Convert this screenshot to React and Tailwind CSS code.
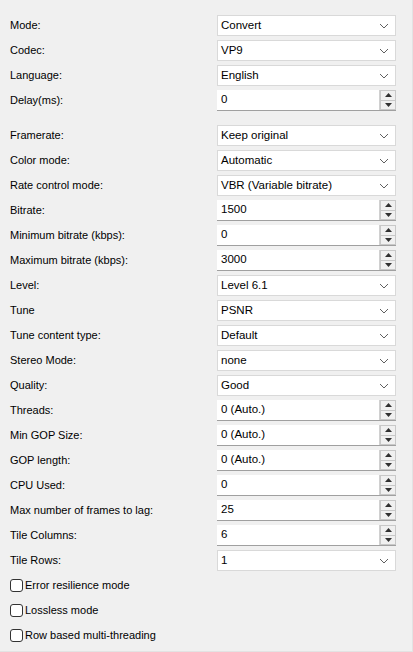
const F = { fontFamily: '"Segoe UI", "Liberation Sans", Arial, sans-serif' };

const Chevron = () => (
  <svg width="10" height="6" viewBox="0 0 10 6" className="shrink-0"><path d="M1 1l4 4 4-4" fill="none" stroke="#606060" strokeWidth="1" /></svg>
);

function Select({ value }) {
  return (
    <div className="w-[179px] h-[21px] bg-white border border-[#d9d9d9] flex items-center justify-between pl-[3px] pr-[6px] text-[11.5px] text-black">
      <span>{value}</span><Chevron />
    </div>
  );
}

function Spin({ value }) {
  return (
    <div className="w-[179px] h-[21px] bg-white border-b border-[#a0a0a0] flex items-center text-[11.5px] text-black">
      <span className="flex-1 pl-[4px]">{value}</span>
      <div className="w-[17px] h-full flex flex-col border-l border-[#d0d0d0]">
        <div className="flex-1 bg-[#f0f0f0] border border-[#c8c8c8] flex items-center justify-center"><svg width="7" height="4"><path d="M0 4L3.5 0L7 4z" fill="#303030" /></svg></div>
        <div className="flex-1 bg-[#f0f0f0] border border-[#c8c8c8] border-t-0 flex items-center justify-center"><svg width="7" height="4"><path d="M0 0L3.5 4L7 0z" fill="#303030" /></svg></div>
      </div>
    </div>
  );
}

const top = [
  ['Mode:', 's', 'Convert'],
  ['Codec:', 's', 'VP9'],
  ['Language:', 's', 'English'],
  ['Delay(ms):', 'n', '0'],
];
const rows = [
  ['Framerate:', 's', 'Keep original'],
  ['Color mode:', 's', 'Automatic'],
  ['Rate control mode:', 's', 'VBR (Variable bitrate)'],
  ['Bitrate:', 'n', '1500'],
  ['Minimum bitrate (kbps):', 'n', '0'],
  ['Maximum bitrate (kbps):', 'n', '3000'],
  ['Level:', 's', 'Level 6.1'],
  ['Tune', 's', 'PSNR'],
  ['Tune content type:', 's', 'Default'],
  ['Stereo Mode:', 's', 'none'],
  ['Quality:', 's', 'Good'],
  ['Threads:', 'n', '0 (Auto.)'],
  ['Min GOP Size:', 'n', '0 (Auto.)'],
  ['GOP length:', 'n', '0 (Auto.)'],
  ['CPU Used:', 'n', '0'],
  ['Max number of frames to lag:', 'n', '25'],
  ['Tile Columns:', 'n', '6'],
  ['Tile Rows:', 's', '1'],
];

function Row({ r }) {
  return (
    <div className="h-[25px] flex items-center">
      <span className="w-[217px] pl-[10px] text-[11px] text-black">{r[0]}</span>
      {r[1] === 's' ? <Select value={r[2]} /> : <Spin value={r[2]} />}
    </div>
  );
}

export default function App() {
  return (
    <div style={F} className="w-[413px] h-[652px] bg-[#f0f0f0] border-b border-r border-[#e3e3e3] pt-[13px]">
      {top.map(r => <Row key={r[0]} r={r} />)}
      <div className="h-[10px]" />
      {rows.map(r => <Row key={r[0]} r={r} />)}
      <div className="pl-[10px]">
        {['Error resilience mode', 'Lossless mode', 'Row based multi-threading'].map(t => (
          <div key={t} className="h-[25px] flex items-center text-[11px] text-black">
            <span className="w-[13px] h-[13px] border border-[#333] rounded-[3px] bg-white mr-[2px]" />{t}
          </div>
        ))}
      </div>
    </div>
  );
}
